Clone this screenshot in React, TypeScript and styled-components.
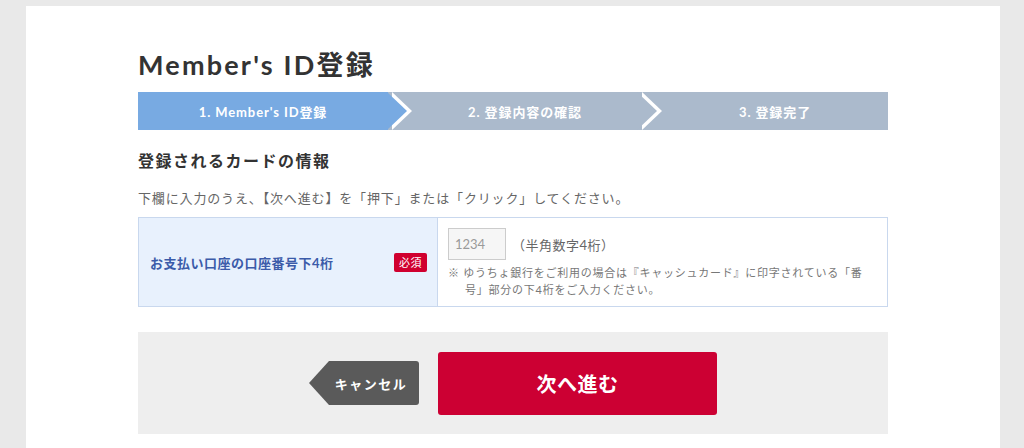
import React from "react";
import styled, { createGlobalStyle } from "styled-components";

const FONT = `Lato, "Noto Sans CJK JP", sans-serif`;

const Global = createGlobalStyle`
  html, body { margin: 0; padding: 0; background: #e9e9e9; }
  body { font-family: ${FONT}; color: #333; }
  * { box-sizing: border-box; }
`;

const Panel = styled.div`
  margin: 6px 0 0 26px;
  width: 974px;
  min-height: 442px;
  background: #fff;
  padding: 39px 112px 0;
`;

const Title = styled.h1`
  margin: 0;
  font-size: 27px;
  line-height: 40px;
  font-weight: 700;
  letter-spacing: 2.2px;
  color: #333;
`;

const Steps = styled.ol`
  list-style: none;
  margin: 7px 0 0;
  padding: 0;
  display: flex;
  height: 38px;
`;

const Step = styled.li<{ $active?: boolean; $first?: boolean; $last?: boolean }>`
  position: relative;
  flex: 0 0 250px;
  display: flex;
  align-items: center;
  justify-content: center;
  padding-left: ${(p) => (p.$first ? "0" : "24px")};
  background: ${(p) => (p.$active ? "#78aae2" : "#abbacc")};
  color: #fff;
  font-size: 13px;
  font-weight: 700;
  letter-spacing: 0.9px;
  z-index: ${(p) => (p.$first ? 3 : p.$last ? 1 : 2)};

  ${(p) =>
    p.$last
      ? ""
      : `
  &::before, &::after {
    content: "";
    position: absolute;
    top: 0;
    width: 20px;
    height: 38px;
    clip-path: polygon(0 0, 100% 50%, 0 100%);
  }
  &::before {
    right: -24px;
    background: #fff;
  }
  &::after {
    right: -19px;
    background: ${p.$active ? "#78aae2" : "#abbacc"};
  }
  `}
`;

const SectionTitle = styled.h2`
  margin: 19px 0 0;
  font-size: 16px;
  line-height: 24px;
  font-weight: 700;
  letter-spacing: 1.5px;
  color: #333;
`;

const Lead = styled.p`
  margin: 15px 0 0;
  font-size: 13px;
  line-height: 20px;
  letter-spacing: 0.85px;
  color: #666;
`;

const FormTable = styled.div`
  margin-top: 9px;
  display: grid;
  grid-template-columns: 299px 1fr;
  border: 1px solid #c9d8ee;
  min-height: 90px;
`;

const LabelCell = styled.div`
  display: flex;
  align-items: center;
  justify-content: space-between;
  padding: 0 10px 0 11px;
  background: #e8f1fd;
  border-right: 1px solid #c9d8ee;
`;

const LabelText = styled.span`
  font-size: 13px;
  font-weight: 700;
  letter-spacing: 0.5px;
  color: #3b5ba9;
`;

const Badge = styled.span`
  display: inline-flex;
  align-items: center;
  justify-content: center;
  width: 33px;
  height: 19px;
  border-radius: 2px;
  background: #d0002f;
  color: #fff;
  font-size: 11px;
  letter-spacing: 0.5px;
`;

const FieldCell = styled.div`
  padding: 10px 10px 7px 10px;
`;

const InputRow = styled.div`
  display: flex;
  align-items: center;
`;

const NumInput = styled.input`
  width: 58px;
  height: 32px;
  border: 1px solid #cccccc;
  background: #f6f6f6;
  padding: 0 6px;
  font-family: ${FONT};
  font-size: 13px;
  color: #333;
  outline: none;
  &::placeholder { color: #9a9a9a; }
`;

const Hint = styled.span`
  margin-left: 6px;
  font-size: 13px;
  letter-spacing: 0.5px;
  color: #666;
`;

const Note = styled.p`
  margin: 4px 0 0;
  padding-left: 17px;
  text-indent: -17px;
  font-size: 11px;
  line-height: 17px;
  letter-spacing: 0.75px;
  color: #777;
`;

const ButtonArea = styled.div`
  margin-top: 25px;
  height: 102px;
  background: #eeeeee;
  display: flex;
  align-items: center;
  justify-content: center;
  gap: 19px;
`;

const CancelButton = styled.button`
  width: 110px;
  height: 44px;
  border: none;
  padding: 0 0 0 14px;
  background: #5a5a5a;
  color: #fff;
  font-family: ${FONT};
  font-size: 13px;
  font-weight: 700;
  letter-spacing: 1.5px;
  border-radius: 0 3px 3px 0;
  clip-path: polygon(20px 0, 100% 0, 100% 100%, 20px 100%, 0 50%);
  cursor: pointer;
`;

const NextButton = styled.button`
  width: 279px;
  height: 63px;
  border: none;
  border-radius: 3px;
  background: #cc0033;
  color: #fff;
  font-family: ${FONT};
  font-size: 20px;
  font-weight: 700;
  letter-spacing: 0.5px;
  cursor: pointer;
`;

export default function App() {
  return (
    <>
      <Global />
      <Panel>
        <Title>Member's ID登録</Title>
        <Steps>
          <Step $active $first>1. Member's ID登録</Step>
          <Step>2. 登録内容の確認</Step>
          <Step $last>3. 登録完了</Step>
        </Steps>
        <SectionTitle>登録されるカードの情報</SectionTitle>
        <Lead>下欄に入力のうえ、【次へ進む】を「押下」または「クリック」してください。</Lead>
        <FormTable>
          <LabelCell>
            <LabelText>お支払い口座の口座番号下4桁</LabelText>
            <Badge>必須</Badge>
          </LabelCell>
          <FieldCell>
            <InputRow>
              <NumInput type="text" placeholder="1234" maxLength={4} />
              <Hint>（半角数字4桁）</Hint>
            </InputRow>
            <Note>
              ※ ゆうちょ銀行をご利用の場合は『キャッシュカード』に印字されている「番号」部分の下4桁をご入力ください。
            </Note>
          </FieldCell>
        </FormTable>
        <ButtonArea>
          <CancelButton type="button">キャンセル</CancelButton>
          <NextButton type="button">次へ進む</NextButton>
        </ButtonArea>
      </Panel>
    </>
  );
}
